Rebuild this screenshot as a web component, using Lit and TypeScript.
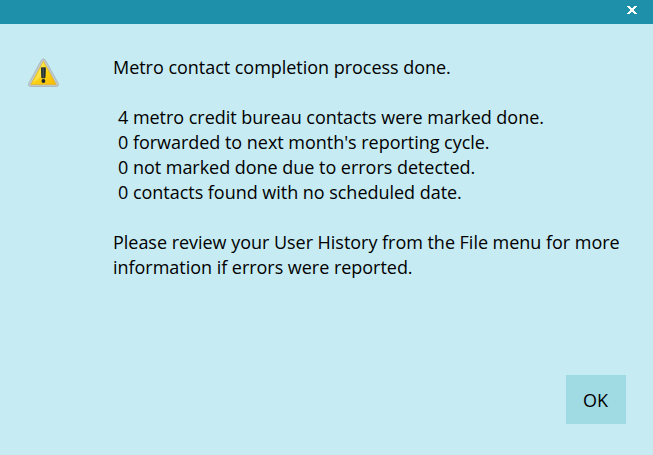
import { LitElement, css, html } from 'lit';
import { customElement, property } from 'lit/decorators.js';

@customElement('warning-icon')
export class WarningIcon extends LitElement {
  static styles = css`
    :host,
    svg {
      display: block;
    }
  `;

  render() {
    return html`
      <svg width="33" height="30" viewBox="0 0 33 30" aria-label="Warning">
        <defs>
          <linearGradient id="face" x1="0" y1="0" x2="0.7" y2="1">
            <stop offset="0" stop-color="#ffec6a" />
            <stop offset="0.5" stop-color="#fcdc14" />
            <stop offset="1" stop-color="#f9bf08" />
          </linearGradient>
          <linearGradient id="mark" x1="0" y1="0" x2="1" y2="0">
            <stop offset="0" stop-color="#17242c" />
            <stop offset="0.5" stop-color="#454f54" />
            <stop offset="1" stop-color="#141a1d" />
          </linearGradient>
        </defs>
        <path
          d="M14.4 2.1Q16.4 -0.4 18.4 2.1L31.2 25.2Q32.4 28.4 29.4 28.5H3.6Q0.6 28.4 1.8 25.2Z"
          fill="#c3c9ca"
          stroke="#a3afb2"
          stroke-width="0.7"
        />
        <path d="M16.4 3.2L29.2 26.6H3.8Z" fill="url(#face)" stroke="#dcae1c" stroke-width="0.6" stroke-linejoin="round" />
        <path d="M16.4 4.5V17L5.4 25.5Z" fill="#fff2a0" opacity="0.35" />
        <path d="M14.4 9.8H18.4L18 19.8H14.8Z" fill="url(#mark)" stroke="#17242c" stroke-width="0.8" stroke-linejoin="round" />
        <circle cx="16.4" cy="23" r="1.9" fill="#17242c" />
      </svg>
    `;
  }
}

@customElement('message-dialog')
export class MessageDialog extends LitElement {
  @property({ type: String }) heading = '';
  @property({ type: Array }) results: string[] = [];
  @property({ type: Array }) note: string[] = [];

  static styles = css`
    :host {
      background: #c6ebf3;
      box-sizing: border-box;
      color: #000000;
      display: flex;
      flex-direction: column;
      font: 18px/25px 'Open Sans', 'Noto Sans', sans-serif;
      height: 100%;
      letter-spacing: -0.03px;
    }

    .titlebar {
      align-items: flex-start;
      background: #1e90aa;
      display: flex;
      flex: none;
      height: 24px;
      justify-content: flex-end;
    }

    .close {
      background: none;
      border: 0;
      margin: 6px 16px 0 0;
      padding: 0;
    }

    .close svg {
      display: block;
    }

    .content {
      display: flex;
      flex: 1;
      padding: 31px 0 0 27px;
    }

    .icon {
      flex: none;
      margin-top: 3px;
      width: 86px;
    }

    p {
      margin: 0;
      white-space: nowrap;
    }

    ul {
      list-style: none;
      margin: 25px 0;
      padding: 0 0 0 5px;
    }

    .actions {
      display: flex;
      flex: none;
      justify-content: flex-end;
      padding: 0 27px 31px 0;
    }

    .ok {
      background: #a0dae3;
      border: 0;
      color: inherit;
      font: inherit;
      height: 49px;
      letter-spacing: inherit;
      padding: 2px 1px 0 0;
      width: 60px;
    }
  `;

  render() {
    return html`
      <div class="titlebar">
        <button class="close" type="button" aria-label="Close" @click=${this.close}>
          <svg width="10" height="8" viewBox="0 0 10 8" shape-rendering="crispEdges">
            <path
              d="M0 0h3v1h1v1h2v-1h1v-1h3v1h-1v1h-1v1h-1v2h1v1h1v1h1v1h-3v-1h-1v-1h-2v1h-1v1h-3v-1h1v-1h1v-1h1v-2h-1v-1h-1v-1h-1z"
              fill="#ffffff"
            />
          </svg>
        </button>
      </div>
      <div class="content">
        <warning-icon class="icon"></warning-icon>
        <div>
          <p>${this.heading}</p>
          <ul>
            ${this.results.map((result) => html`<li>${result}</li>`)}
          </ul>
          ${this.note.map((line) => html`<p>${line}</p>`)}
        </div>
      </div>
      <div class="actions">
        <button class="ok" type="button" @click=${this.close}>OK</button>
      </div>
    `;
  }

  close() {
    this.dispatchEvent(new CustomEvent('close', { bubbles: true, composed: true }));
  }
}

@customElement('app-root')
export class AppRoot extends LitElement {
  static styles = css`
    :host {
      display: block;
      height: 100vh;
      overflow: hidden;
    }
  `;

  results = [
    '4 metro credit bureau contacts were marked done.',
    "0 forwarded to next month's reporting cycle.",
    '0 not marked done due to errors detected.',
    '0 contacts found with no scheduled date.',
  ];

  note = [
    'Please review your User History from the File menu for more',
    'information if errors were reported.',
  ];

  render() {
    return html`
      <message-dialog
        heading="Metro contact completion process done."
        .results=${this.results}
        .note=${this.note}
      ></message-dialog>
    `;
  }
}
